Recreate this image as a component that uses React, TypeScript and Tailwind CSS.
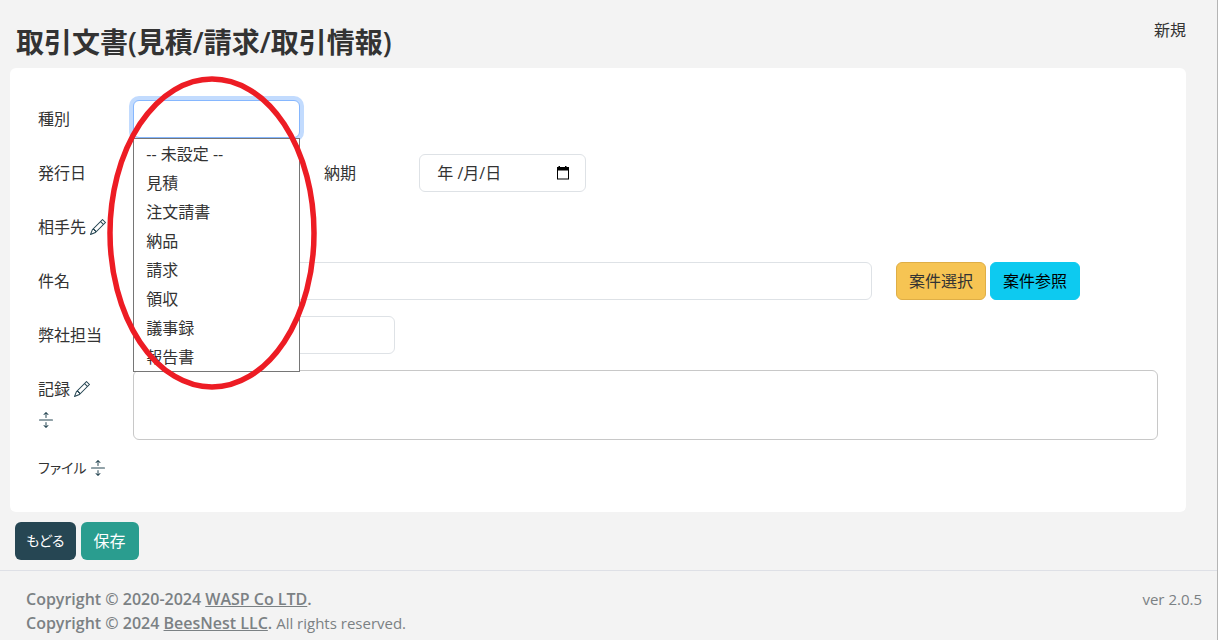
import React, { useState } from 'react';
import { BsArrowsExpand, BsPencil } from 'react-icons/bs';

const DOCUMENT_TYPES = ['-- 未設定 --', '見積', '注文請書', '納品', '請求', '領収', '議事録', '報告書'];

const fieldClass = 'w-full h-[38px] px-3 rounded-md border border-[#dee2e6] bg-white outline-none';

interface IconButtonProps {
  label: string;
  children: React.ReactNode;
}

const IconButton: React.FC<IconButtonProps> = ({ label, children }) => (
  <button type="button" aria-label={label} className="shrink-0 text-[#264653] cursor-pointer">
    {children}
  </button>
);

const DateField: React.FC<{ id: string }> = ({ id }) => (
  <div className="flex items-center h-[38px] pl-[17px] pr-3.5 rounded-md border border-[#dee2e6] bg-white">
    <input id={id} type="text" placeholder="年 /月/日" className="flex-1 min-w-0 outline-none placeholder:text-[#333] placeholder:opacity-100" />
    <button type="button" aria-label="日付を選択" className="shrink-0 text-black">
      <svg className="w-4 h-4" viewBox="0 0 16 16" fill="currentColor">
        <path fillRule="evenodd" d="M3.500 1h1.500v1h5V1h1.500v1H14v12.500H2V2h1.500V1zM3 5.500v8h10v-8H3z" />
      </svg>
    </button>
  </div>
);

const TypeSelect: React.FC = () => {
  const [value, setValue] = useState('');
  const [open, setOpen] = useState(true);

  const choose = (type: string) => {
    setValue(type);
    setOpen(false);
  };

  return (
    <div className="relative">
      <select
        id="type"
        value={value}
        onChange={(e) => setValue(e.target.value)}
        className="block w-full h-[38px] px-3 rounded-md border border-[#86b7fe] bg-white appearance-none outline-none ring-4 ring-[#c2dbfe]"
      >
        <option value=""></option>
        {DOCUMENT_TYPES.map(type => <option key={type} value={type}>{type}</option>)}
      </select>
      {open && (
        <ul role="listbox" aria-label="種別" className="absolute z-10 top-full left-0 w-full border border-[#767676] bg-white">
          {DOCUMENT_TYPES.map(type => (
            <li
              key={type}
              role="option"
              aria-selected={type === value}
              onClick={() => choose(type)}
              className="h-[29px] px-3 leading-[31px] whitespace-nowrap cursor-default"
            >
              {type}
            </li>
          ))}
        </ul>
      )}
      {/* hand-drawn marker around the open list */}
      <svg className="absolute z-20 -top-6 -left-[26px] w-[210px] h-[315px] pointer-events-none" viewBox="0 0 210 315" fill="none">
        <ellipse cx="105" cy="157" rx="102" ry="154" stroke="#ed1c24" strokeWidth="5.500" />
      </svg>
    </div>
  );
};

const App: React.FC = () => {
  return (
    <div className="min-h-screen border-r border-[#b4b4b4] bg-[#f3f3f3] text-base text-[#333] font-['Open_Sans','Noto_Sans_CJK_JP',sans-serif] [font-feature-settings:'palt']">
      <header className="flex items-start justify-between pt-[18px] pb-2 pl-4 pr-[31px]">
        <h1 className="mt-1.5 text-[28px] leading-9 font-semibold">取引文書(見積/請求/取引情報)</h1>
        <span>新規</span>
      </header>

      <main>
        <form onSubmit={(e) => e.preventDefault()}>
          <div className="ml-2.5 mr-[31px] px-7 py-8 rounded-md bg-white grid grid-cols-12 gap-x-6 gap-y-4">
            <label htmlFor="type" className="leading-[38px] whitespace-nowrap">種別</label>
            <div className="col-span-11 grid grid-cols-11 gap-x-6">
              <div className="col-span-2"><TypeSelect /></div>
            </div>

            <label htmlFor="issued" className="leading-[38px] whitespace-nowrap">発行日</label>
            <div className="col-span-2"><DateField id="issued" /></div>
            <label htmlFor="due" className="leading-[38px] whitespace-nowrap">納期</label>
            <div className="col-span-2"><DateField id="due" /></div>
            <div className="col-span-6" />

            <div className="flex items-center gap-1 whitespace-nowrap">
              <label htmlFor="client">相手先</label>
              <IconButton label="相手先を編集"><BsPencil /></IconButton>
            </div>
            <div className="col-span-2"><input id="client" type="text" className={fieldClass} /></div>
            <div className="col-span-9" />

            <label htmlFor="subject" className="leading-[38px] whitespace-nowrap">件名</label>
            <div className="col-span-8"><input id="subject" type="text" className={fieldClass} /></div>
            <div className="col-span-3 flex gap-1">
              <button type="button" className="h-[38px] px-3 rounded-md border border-[#dfae46] bg-[#f6c453] whitespace-nowrap">案件選択</button>
              <button type="button" className="h-[38px] px-3 rounded-md border border-[#0dcaf0] bg-[#0dcaf0] text-black whitespace-nowrap">案件参照</button>
            </div>

            <label htmlFor="staff" className="leading-[38px] whitespace-nowrap">弊社担当</label>
            <div className="col-span-3"><input id="staff" type="text" className={fieldClass} /></div>
            <div className="col-span-8" />

            <div className="whitespace-nowrap">
              <div className="flex items-center gap-1 h-[38px]">
                <label htmlFor="record">記録</label>
                <IconButton label="記録を編集"><BsPencil /></IconButton>
              </div>
              <div className="flex items-center h-6">
                <IconButton label="記録を広げる"><BsArrowsExpand /></IconButton>
              </div>
            </div>
            <textarea id="record" className="col-span-11 block h-[70px] px-3 py-1.5 rounded-md border border-[#c8c8c8] bg-white resize-none outline-none" />

            <div className="flex items-center gap-1 h-6 whitespace-nowrap">
              <span className="text-sm">ファイル</span>
              <IconButton label="ファイルを広げる"><BsArrowsExpand /></IconButton>
            </div>
          </div>

          <div className="flex gap-[5px] px-[15px] py-2.5">
            <button type="button" className="h-[38px] px-[11px] rounded-md bg-[#264653] text-white text-sm">もどる</button>
            <button type="submit" className="h-[38px] px-[13px] rounded-md bg-[#2a9d8f] text-white">保存</button>
          </div>
        </form>
      </main>

      <footer className="flex justify-between pt-4 pl-[26px] pr-[15px] border-t border-[#dee0e6] text-[15px] leading-6 text-[#7b8184]">
        <div>
          <p className="text-base font-semibold">Copyright © 2020-2024 <a href="#" className="underline">WASP Co LTD</a>.</p>
          <p><span className="text-base font-semibold">Copyright © 2024 <a href="#" className="underline">BeesNest LLC</a>.</span> All rights reserved.</p>
        </div>
        <span>ver 2.0.5</span>
      </footer>
    </div>
  );
};

export default App;
